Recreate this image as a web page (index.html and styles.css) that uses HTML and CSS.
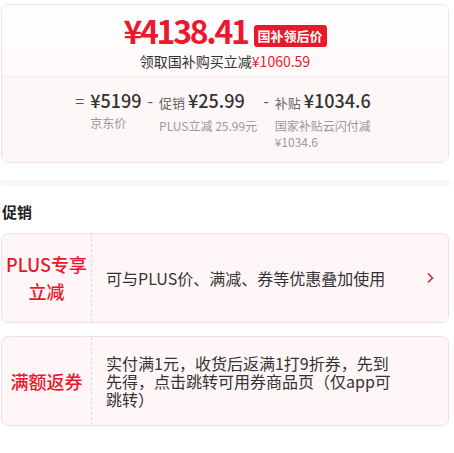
FILE: index.html
```html
<!DOCTYPE html>
<html lang="zh-CN">
  <head>
    <meta charset="UTF-8" />
    <meta name="viewport" content="width=device-width, initial-scale=1.0" />
    <title>价格详情</title>
    <link rel="stylesheet" href="styles.css">
  </head>
  <body>
    <div class="price-card">
      <div class="price-top">
        <div class="price-row">
          <span class="price">¥4138.41</span>
          <span class="badge">国补领后价</span>
        </div>
        <div class="price-sub">领取国补购买立减<span class="red">¥1060.59</span></div>
      </div>

      <div class="calc">
        <span class="sign">=</span>
        <div class="item">
          <div class="line"><span class="amt">¥5199</span></div>
          <div class="desc">京东价</div>
        </div>
        <span class="sign">-</span>
        <div class="item">
          <div class="line"><span class="lbl">促销</span><span class="amt">¥25.99</span></div>
          <div class="desc">PLUS立减 25.99元</div>
        </div>
        <span class="sign">-</span>
        <div class="item">
          <div class="line"><span class="lbl">补贴</span><span class="amt">¥1034.6</span></div>
          <div class="desc">国家补贴云闪付减¥1034.6</div>
        </div>
      </div>
    </div>

    <div class="band"></div>

    <h3 class="title">促销</h3>

    <div class="promo">
      <div class="promo-tag">PLUS专享<br />立减</div>
      <div class="promo-body">
        <div class="promo-text">可与PLUS价、满减、券等优惠叠加使用</div>
        <svg class="arrow" width="8" height="12" viewBox="0 0 8 12">
          <path d="M2 1.5 L6.5 6 L2 10.5" fill="none" stroke="#d8283a" stroke-width="1.6" />
        </svg>
      </div>
    </div>

    <div class="promo">
      <div class="promo-tag">满额返券</div>
      <div class="promo-body">
        <div class="promo-text">实付满1元，收货后返满1打9折券，先到先得，点击跳转可用券商品页（仅app可跳转）</div>
      </div>
    </div>
  </body>
</html>
```

FILE: styles.css
```css
* {
  box-sizing: border-box;
  font-family: "Noto Sans CJK SC", "Noto Sans", sans-serif;
}
body {
  margin: 0;
  padding: 4px 5px 0 1px;
  background: #ffffff;
  color: #333333;
}
.red {
  color: #e8192c;
}

/* price card */
.price-card {
  border: 1px solid #f1e4e6;
  border-radius: 8px;
  overflow: hidden;
}
.price-top {
  padding: 6px 0 5px;
  text-align: center;
  background: linear-gradient(#ffffff, #fffafa);
}
.price-row {
  display: flex;
  justify-content: center;
  height: 40px;
}
.price {
  font-size: 32px;
  line-height: 38px;
  font-weight: 700;
  color: #ea1930;
  letter-spacing: -2.3px;
}
.badge {
  align-self: flex-end;
  margin: 0 0 4px 6px;
  height: 22px;
  line-height: 22px;
  padding: 0 4px;
  border-radius: 3px;
  background: #e8192c;
  color: #ffffff;
  font-size: 13px;
  font-weight: 700;
}
.price-sub {
  font-size: 14px;
  line-height: 20px;
  color: #333333;
}
.calc {
  display: flex;
  justify-content: center;
  gap: 6px;
  padding: 11px 0 12px;
  background: #fdf7f7;
  border-top: 1px solid #f8eded;
}
.sign {
  font-size: 16px;
  line-height: 24px;
  color: #555555;
}
.item {
  max-width: 100px;
}
.line {
  display: flex;
  align-items: baseline;
  gap: 3px;
  line-height: 24px;
  white-space: nowrap;
}
.lbl {
  font-size: 13px;
  color: #666666;
}
.amt {
  font-size: 18px;
  font-weight: 500;
  color: #333333;
}
.desc {
  margin-top: 3px;
  font-size: 12px;
  line-height: 16px;
  color: #999999;
}

.band {
  margin-top: 17px;
  height: 6px;
  background: #f5f6f9;
}
.title {
  margin: 15px 0 10px 1px;
  font-size: 15px;
  line-height: 22px;
  font-weight: 700;
  color: #222222;
}

/* promotions */
.promo {
  display: flex;
  margin-bottom: 13px;
  border: 1px solid #f3dfe2;
  border-radius: 7px;
  background: #fff6f7;
}
.promo-tag {
  width: 90px;
  flex-shrink: 0;
  display: flex;
  align-items: center;
  justify-content: center;
  text-align: center;
  padding: 17px 0;
  font-size: 18px;
  line-height: 27px;
  font-weight: 500;
  color: #e8192c;
  border-right: 1px dashed #ecd3d7;
}
.promo-body {
  flex: 1;
  display: flex;
  align-items: center;
  padding: 17px 14px;
}
.promo-text {
  max-width: 290px;
  font-size: 16px;
  line-height: 18px;
  color: #333333;
}
.arrow {
  margin-left: auto;
}
```
